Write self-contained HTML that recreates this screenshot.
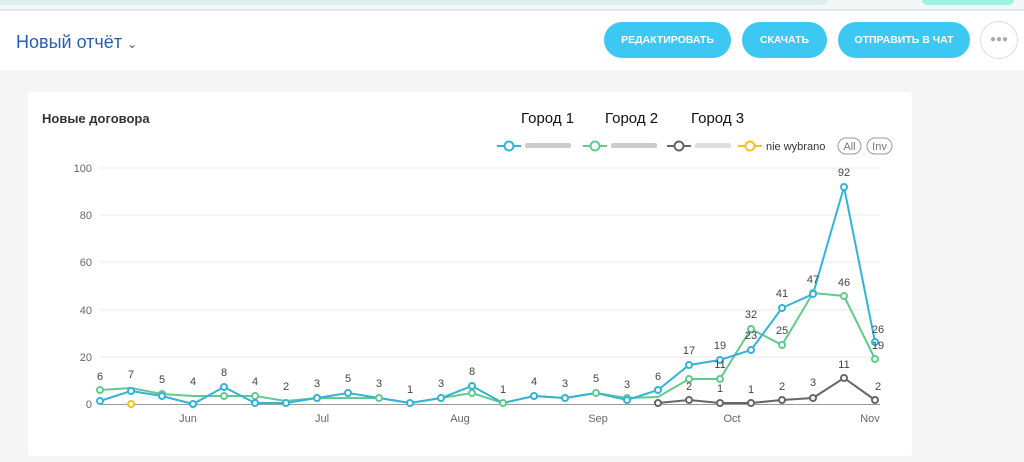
<!DOCTYPE html><html><head><meta charset="utf-8"><style>
body{margin:0;width:1024px;height:462px;overflow:hidden;background:#f5f5f5;font-family:"Liberation Sans",sans-serif;position:relative}
.top{position:absolute;left:0;top:0;width:1024px;height:9px;background:#f2f7f6;border-bottom:2px solid #e3e8e8}
.top .f{position:absolute;left:0;top:0;width:828px;height:5px;background:#dcefeb;border-radius:0 0 6px 0}
.top .m{position:absolute;left:922px;top:0;width:92px;height:5px;background:#9ff0e1;border-radius:0 0 8px 8px}
.hdr{position:absolute;left:0;top:11px;width:1024px;height:59px;background:#fff}
.title{position:absolute;left:16px;top:32px;font-size:18px;color:#2b5ea8}
.btn{position:absolute;top:22px;height:36px;border-radius:18px;background:#3dc8f3;color:#fff;font-size:10.5px;font-weight:bold;line-height:36px;text-align:center}
.card{position:absolute;left:28px;top:92px;width:884px;height:364px;background:#fff;border-radius:3px}
</style></head><body>
<div class="top"><div class="f"></div><div class="m"></div></div>
<div class="hdr"></div>
<div class="title">Новый отчёт <span style="font-size:12px;color:#555">&#8964;</span></div>
<div class="btn" style="left:604px;width:127px">РЕДАКТИРОВАТЬ</div>
<div class="btn" style="left:742px;width:85px">СКАЧАТЬ</div>
<div class="btn" style="left:838px;width:132px">ОТПРАВИТЬ В ЧАТ</div>
<div style="position:absolute;left:980px;top:21px;width:36px;height:36px;border:1px solid #ddd;border-radius:50%;background:#fff;text-align:center;line-height:35px;color:#aaa;font-size:10px;letter-spacing:0px">●●●</div>
<div class="card"></div>
<svg style="position:absolute;left:0;top:0" width="1024" height="462" font-family="Liberation Sans, sans-serif">
<text x="42" y="123" font-size="13" font-weight="bold" fill="#333">Новые договора</text>
<g font-size="15" fill="#111"><text x="521" y="123">Город 1</text><text x="605" y="123">Город 2</text><text x="691" y="123">Город 3</text></g>
<g fill="#fff" stroke-width="2">
<line x1="497" y1="146" x2="521" y2="146" stroke="#35b3d6"/><circle cx="509" cy="146" r="4.5" stroke="#35b3d6"/>
<rect x="525" y="143" width="46" height="5" fill="#ccc" stroke="none" rx="2"/>
<line x1="583" y1="146" x2="607" y2="146" stroke="#63c98e"/><circle cx="595" cy="146" r="4.5" stroke="#63c98e"/>
<rect x="611" y="143" width="46" height="5" fill="#ccc" stroke="none" rx="2"/>
<line x1="667" y1="146" x2="691" y2="146" stroke="#666"/><circle cx="679" cy="146" r="4.5" stroke="#666"/>
<rect x="695" y="143" width="36" height="5" fill="#ddd" stroke="none" rx="2"/>
<line x1="738" y1="146" x2="762" y2="146" stroke="#f7c21e"/><circle cx="750" cy="146" r="4.5" stroke="#f7c21e"/>
</g>
<text x="766" y="150" font-size="11" fill="#333">nie wybrano</text>
<rect x="838" y="138" width="23" height="16" rx="8" fill="none" stroke="#999"/><text x="849.5" y="150" font-size="11" fill="#777" text-anchor="middle">All</text>
<rect x="867" y="138" width="25" height="16" rx="8" fill="none" stroke="#999"/><text x="879.5" y="150" font-size="11" fill="#777" text-anchor="middle">Inv</text>
<g stroke="#e8e8e8"><line x1="100" y1="168" x2="880" y2="168"/><line x1="100" y1="215" x2="880" y2="215"/><line x1="100" y1="262" x2="880" y2="262"/><line x1="100" y1="310" x2="880" y2="310"/><line x1="100" y1="357" x2="880" y2="357"/></g>
<line x1="100" y1="404.5" x2="880" y2="404.5" stroke="#999"/>
<g font-size="11" fill="#666" text-anchor="end"><text x="92" y="172">100</text><text x="92" y="219">80</text><text x="92" y="266">60</text><text x="92" y="314">40</text><text x="92" y="361">20</text><text x="92" y="408">0</text></g>
<g font-size="11" fill="#666" text-anchor="middle"><text x="188" y="422">Jun</text><text x="322" y="422">Jul</text><text x="460" y="422">Aug</text><text x="598" y="422">Sep</text><text x="732" y="422">Oct</text><text x="870" y="422">Nov</text></g>
<g fill="#fff" stroke-width="2">
<polyline fill="none" stroke="#63c98e" points="100,390 131,388 162,394 193,396 224,396 255,396 286,401 317,398 348,398 379,398 410,403 441,398 472,393 503,403 534,396 565,398 596,393 627,398 658,397 689,379 720,379 751,329 782,345 813,293 844,296 875,359"/>
<polyline fill="none" stroke="#35b3d6" points="100,401 131,391 162,396 193,404 224,387 255,403 286,403 317,398 348,393 379,398 410,403 441,398 472,386 503,403 534,396 565,398 596,393 627,400 658,390 689,365 720,360 751,350 782,308 813,294 844,187 875,342"/>
<polyline fill="none" stroke="#666" points="658,403 689,400 720,403 751,403 782,400 813,398 844,378 875,400"/>
<g stroke="#63c98e"><circle cx="100" cy="390" r="3"/><circle cx="162" cy="394" r="3"/><circle cx="224" cy="396" r="3"/><circle cx="255" cy="396" r="3"/><circle cx="317" cy="398" r="3"/><circle cx="379" cy="398" r="3"/><circle cx="472" cy="393" r="3"/><circle cx="503" cy="403" r="3"/><circle cx="596" cy="393" r="3"/><circle cx="627" cy="398" r="3"/><circle cx="689" cy="379" r="3"/><circle cx="720" cy="379" r="3"/><circle cx="751" cy="329" r="3"/><circle cx="782" cy="345" r="3"/><circle cx="813" cy="293" r="3"/><circle cx="844" cy="296" r="3"/><circle cx="875" cy="359" r="3"/></g>
<g stroke="#35b3d6"><circle cx="100" cy="401" r="3"/><circle cx="131" cy="391" r="3"/><circle cx="162" cy="396" r="3"/><circle cx="193" cy="404" r="3"/><circle cx="224" cy="387" r="3"/><circle cx="255" cy="403" r="3"/><circle cx="286" cy="403" r="3"/><circle cx="317" cy="398" r="3"/><circle cx="348" cy="393" r="3"/><circle cx="410" cy="403" r="3"/><circle cx="441" cy="398" r="3"/><circle cx="472" cy="386" r="3"/><circle cx="534" cy="396" r="3"/><circle cx="565" cy="398" r="3"/><circle cx="627" cy="400" r="3"/><circle cx="658" cy="390" r="3"/><circle cx="689" cy="365" r="3"/><circle cx="720" cy="360" r="3"/><circle cx="751" cy="350" r="3"/><circle cx="782" cy="308" r="3"/><circle cx="813" cy="294" r="3"/><circle cx="844" cy="187" r="3"/><circle cx="875" cy="342" r="3"/></g>
<g stroke="#666"><circle cx="658" cy="403" r="3"/><circle cx="689" cy="400" r="3"/><circle cx="720" cy="403" r="3"/><circle cx="751" cy="403" r="3"/><circle cx="782" cy="400" r="3"/><circle cx="813" cy="398" r="3"/><circle cx="844" cy="378" r="3"/><circle cx="875" cy="400" r="3"/></g>
<circle cx="131" cy="404" r="3" stroke="#f7c21e"/>
</g>
<g font-size="11" fill="#444" text-anchor="middle">
<text x="100" y="380">6</text><text x="131" y="378">7</text><text x="162" y="383">5</text><text x="193" y="385">4</text><text x="224" y="376">8</text><text x="255" y="385">4</text><text x="286" y="390">2</text><text x="317" y="387">3</text><text x="348" y="382">5</text><text x="379" y="387">3</text><text x="410" y="393">1</text><text x="441" y="387">3</text><text x="472" y="375">8</text><text x="503" y="393">1</text><text x="534" y="385">4</text><text x="565" y="387">3</text><text x="596" y="382">5</text><text x="627" y="388">3</text><text x="658" y="380">6</text><text x="689" y="354">17</text><text x="720" y="349">19</text><text x="751" y="318">32</text><text x="782" y="297">41</text><text x="813" y="283">47</text><text x="844" y="176">92</text><text x="878" y="333">26</text>
<text x="689" y="390">2</text><text x="720" y="368">11</text><text x="751" y="339">23</text><text x="782" y="334">25</text><text x="844" y="286">46</text><text x="878" y="349">19</text>
<text x="751" y="393">1</text><text x="782" y="390">2</text><text x="813" y="386">3</text><text x="844" y="368">11</text><text x="878" y="390">2</text><text x="720" y="392">1</text>
</g>
</svg>
</body></html>
